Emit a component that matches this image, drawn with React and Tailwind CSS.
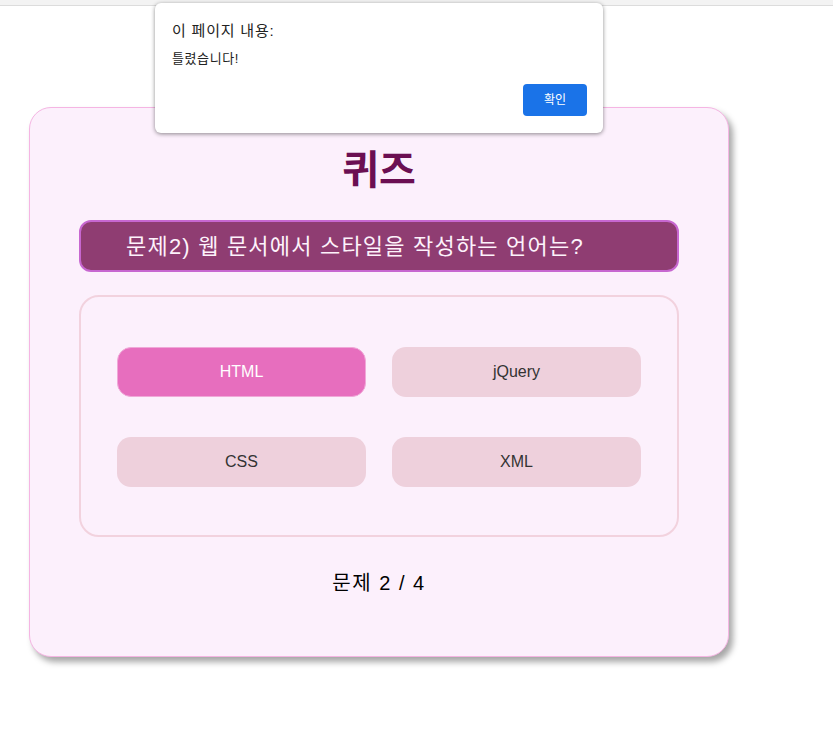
import React, { useState } from "react";

const options = ["HTML", "jQuery", "CSS", "XML"];

export default function App() {
  const [picked, setPicked] = useState(0);

  return (
    <div
      className="relative min-h-[744px] w-full bg-white"
      style={{ fontFamily: '"Liberation Sans", "Noto Sans CJK KR", sans-serif' }}
    >
      <div className="h-[6px] w-full border-b border-[#dcdcdc] bg-[#f3f3f3]" />

      <div className="pl-[29px] pt-[101px]">
        <div className="flex h-[550px] w-[700px] flex-col items-center rounded-[22px] border border-[#f5b5e3] bg-[#fcf0fc] pt-[34px] shadow-[4px_5px_6px_rgba(0,0,0,0.35)]">
          <h1 className="text-[40px] font-bold leading-[56px] text-[#6b0f52]">퀴즈</h1>

          <div className="mt-[22px] flex h-[52px] w-[600px] items-center rounded-[12px] border-2 border-[#c767d0] bg-[#8f3d72] pl-[45px]">
            <p className="text-[22px] tracking-[1.2px] text-[#fdf2fb]">문제2) 웹 문서에서 스타일을 작성하는 언어는?</p>
          </div>

          <div className="mt-[23px] grid h-[242px] w-[600px] grid-cols-2 content-start gap-x-[26px] gap-y-[40px] rounded-[20px] border-2 border-[#f2d2de] px-[36px] pt-[50px]">
            {options.map((opt, i) => (
              <button
                key={opt}
                type="button"
                onClick={() => setPicked(i)}
                className={
                  i === picked
                    ? "h-[50px] rounded-[14px] border border-[#f0a8d8] bg-[#e76ebe] text-[16px] text-white"
                    : "h-[50px] rounded-[14px] bg-[#eed0dc] text-[16px] text-[#333]"
                }
              >
                {opt}
              </button>
            ))}
          </div>

          <p className="mt-[31px] text-[20px] tracking-[1.5px] text-black">문제 2 / 4</p>
        </div>
      </div>

      {/* alert dialog */}
      <div className="absolute left-[155px] top-[3px] h-[130px] w-[448px] rounded-[6px] bg-white px-[17px] pt-[18px] shadow-[0_1px_4px_rgba(0,0,0,0.45)]">
        <p className="text-[15px] tracking-[0.8px] leading-[20px] text-[#222]">이 페이지 내용:</p>
        <p className="mt-[9px] text-[13px] tracking-[0.6px] leading-[18px] text-[#222]">틀렸습니다!</p>
        <div className="mt-[16px] flex justify-end">
          <button type="button" className="mr-[-1px] h-[32px] w-[64px] rounded-[4px] bg-[#1a73e8] text-[12px] text-white">
            확인
          </button>
        </div>
      </div>
    </div>
  );
}
